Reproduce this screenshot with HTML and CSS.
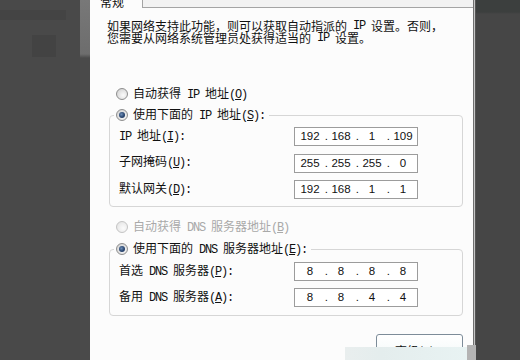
FILE: index.html
```html
<!DOCTYPE html>
<html lang="zh-CN">
<head>
<meta charset="utf-8">
<title>Internet 协议 (TCP/IP) 属性</title>
<link rel="stylesheet" href="styles.css">
</head>
<body>
<div class="screen">
  <div class="left">
    <div class="left-dark">
      <div class="blob b1"></div>
      <div class="blob b2"></div>
    </div>
    <div class="frame"></div>
  </div>
  <div class="dialog">
    <div class="tabs">
      <div class="tab"><span class="tab-label">常规</span></div>
      <div class="tab-rest"></div>
    </div>
    <div class="body">
      <div class="desc">
        <div class="line">如果网络支持此功能，则可以获取自动指派的<span class="en"> IP </span>设置。否则，</div>
        <div class="line">您需要从网络系统管理员处获得适当的<span class="en"> IP </span>设置。</div>
      </div>

      <div class="radio-row first"><span class="radio"></span><span class="txt">自动获得<span class="en"> IP </span>地址<span class="en">(<u>O</u>)</span></span></div>

      <fieldset class="group g1">
        <legend class="legend"><span class="radio on"></span><span class="txt">使用下面的<span class="en"> IP </span>地址<span class="en">(<u>S</u>):</span></span></legend>
        <div class="fields">
          <div class="field"><span class="label"><span class="en">IP </span>地址<span class="en">(<u>I</u>):</span></span>
            <div class="ip"><span class="seg">192</span><span class="dot">.</span><span class="seg">168</span><span class="dot">.</span><span class="seg">1</span><span class="dot">.</span><span class="seg">109</span></div></div>
          <div class="field"><span class="label">子网掩码<span class="en">(<u>U</u>):</span></span>
            <div class="ip"><span class="seg">255</span><span class="dot">.</span><span class="seg">255</span><span class="dot">.</span><span class="seg">255</span><span class="dot">.</span><span class="seg">0</span></div></div>
          <div class="field"><span class="label">默认网关<span class="en">(<u>D</u>):</span></span>
            <div class="ip"><span class="seg">192</span><span class="dot">.</span><span class="seg">168</span><span class="dot">.</span><span class="seg">1</span><span class="dot">.</span><span class="seg">1</span></div></div>
        </div>
      </fieldset>

      <div class="radio-row disabled"><span class="radio off"></span><span class="txt">自动获得<span class="en"> DNS </span>服务器地址<span class="en">(<u>B</u>)</span></span></div>

      <fieldset class="group g2">
        <legend class="legend"><span class="radio on"></span><span class="txt">使用下面的<span class="en"> DNS </span>服务器地址<span class="en">(<u>E</u>):</span></span></legend>
        <div class="fields dns">
          <div class="field"><span class="label">首选<span class="en"> DNS </span>服务器<span class="en">(<u>P</u>):</span></span>
            <div class="ip"><span class="seg">8</span><span class="dot">.</span><span class="seg">8</span><span class="dot">.</span><span class="seg">8</span><span class="dot">.</span><span class="seg">8</span></div></div>
          <div class="field"><span class="label">备用<span class="en"> DNS </span>服务器<span class="en">(<u>A</u>):</span></span>
            <div class="ip"><span class="seg">8</span><span class="dot">.</span><span class="seg">8</span><span class="dot">.</span><span class="seg">4</span><span class="dot">.</span><span class="seg">4</span></div></div>
        </div>
      </fieldset>

      <div class="actions"><button class="btn" type="button">高级(<u>V</u>)...</button></div>
    </div>
  </div>
  <div class="divider"></div>
  <div class="right"></div>
  <div class="glare"></div>
  <div class="square"></div>
</div>
</body>
</html>
```
FILE: styles.css
```css
* { box-sizing: border-box; }
html, body { margin: 0; padding: 0; }
body {
  width: 520px;
  height: 360px;
  overflow: hidden;
  background: #484848;
  font-family: "Noto Sans CJK SC", sans-serif;
  font-size: 12px;
  color: #111;
}
.screen {
  position: relative;
  display: flex;
  width: 520px;
  height: 360px;
  overflow: hidden;
}
.left {
  width: 90px;
  display: flex;
  flex: none;
}
.left-dark {
  width: 80px;
  background: #494949;
  display: flex;
  flex-direction: column;
}
.blob { background: #444444; }
.b1 { margin-top: 10px; width: 66px; height: 10px; }
.b2 { margin: 15px 0 0 32px; width: 24px; height: 22px; background: #434343; }
.frame {
  width: 10px;
  background: linear-gradient(to bottom, #787878 0, #6d6d6d 54px, #4a4a4a 58px, #4a4a4a 100%);
}
.dialog {
  width: 383px;
  flex: none;
  background: #fcfcfc;
  display: flex;
  flex-direction: column;
}
.tabs {
  display: flex;
  height: 11px;
  background: #f2f2f2;
}
.tab {
  width: 53px;
  background: #fcfcfc;
  border-right: 1px solid #a4a4a4;
  overflow: hidden;
}
.tab-label {
  display: block;
  margin-top: -4px;
  padding-left: 10px;
  line-height: 12px;
}
.tab-rest {
  flex: 1;
  border-bottom: 1px solid #a4a4a4;
}
.body {
  padding: 12px 10px 0 19px;
}
.en {
  font-family: "Liberation Mono", monospace;
  letter-spacing: -1.2px;
}
u { text-decoration: underline; text-underline-offset: 1px; }
.desc {
  margin: 0 0 0 -2px;
  white-space: nowrap;
}
.desc .line {
  height: 12px;
  line-height: 12px;
}
.desc .en {
  display: inline-block;
  height: 12px;
  line-height: 12px;
  vertical-align: top;
  white-space: pre;
}
.radio-row, .legend {
  display: flex;
  align-items: center;
  height: 14px;
  line-height: 14px;
  white-space: nowrap;
}
.txt { white-space: pre; }
.radio-row { margin-left: 7px; }
.radio-row.first { margin-top: 43px; }
.radio-row.disabled { margin-top: 13px; color: #a9a9a9; }
.radio {
  position: relative;
  width: 12px;
  height: 12px;
  flex: none;
  margin-right: 5px;
  border-radius: 50%;
  border: 1px solid #8e8e8e;
  background: radial-gradient(circle at 62% 62%, #fbfbfb 0, #e6e6e6 45%, #c9c9c9 100%);
}
.radio.on::after {
  content: "";
  position: absolute;
  left: 2px;
  top: 2px;
  width: 6px;
  height: 6px;
  border-radius: 50%;
  background: radial-gradient(circle at 40% 40%, #6f8fb8 0, #2a4670 55%, #1c3258 100%);
}
.radio.off {
  border-color: #c4c4c4;
  background: radial-gradient(circle at 62% 62%, #fbfbfb 0, #eeeeee 50%, #dedede 100%);
}
.group {
  margin: 0;
  min-width: 0;
  border: 1px solid #d6d6d6;
  border-radius: 4px;
}
.g1 { margin-top: 7px; padding: 5px 0 7px 0; }
.g2 { margin-top: 8px; padding: 6px 0 8px 0; }
.legend {
  margin-left: 4px;
  padding: 0 4px 0 2px;
}
.fields {
  display: flex;
  flex-direction: column;
  gap: 7.5px;
  padding-left: 9px;
}
.fields.dns { gap: 7px; }
.field {
  display: flex;
  align-items: center;
  height: 19px;
}
.label {
  width: 175px;
  line-height: 14px;
  margin-top: -2px;
  white-space: pre;
}
.ip {
  display: flex;
  width: 124px;
  height: 19px;
  padding-left: 2px;
  border: 1px solid #9c9c9c;
  background: #fff;
  font-family: "Liberation Sans", sans-serif;
  font-size: 11.5px;
  line-height: 17px;
  color: #111;
}
.seg { width: 26px; text-align: center; }
.dot { width: 5px; text-align: right; }
.actions {
  display: flex;
  justify-content: flex-end;
  margin-top: 18px;
}
.btn {
  width: 87px;
  height: 30px;
  margin: 0;
  padding: 3px 0 0 0;
  border: 1px solid #7d8c99;
  border-radius: 3px;
  background: linear-gradient(to bottom, #ffffff 0, #f0f7f7 100%);
  font-family: "Noto Sans CJK SC", sans-serif;
  font-size: 12px;
  line-height: 12px;
  color: #111;
  text-align: center;
  vertical-align: top;
}
.divider {
  width: 3px;
  flex: none;
  background: #c4c4c4;
  border-left: 1px solid #707070;
  border-right: 1px solid #555;
}
.right {
  flex: 1;
  background: linear-gradient(to bottom, #3c3f3e 0, #3c3f3e 12px, #464646 14px, #464646 100%);
}
.glare {
  position: absolute;
  left: 345px;
  top: 347px;
  width: 122px;
  height: 13px;
  background: linear-gradient(to right, #e9eeee 0, #e4eded 30%, #e8f3f3 100%);
}
.square {
  position: absolute;
  left: 467px;
  top: 345px;
  width: 9px;
  height: 15px;
  background: #b4b4b4;
}
```
